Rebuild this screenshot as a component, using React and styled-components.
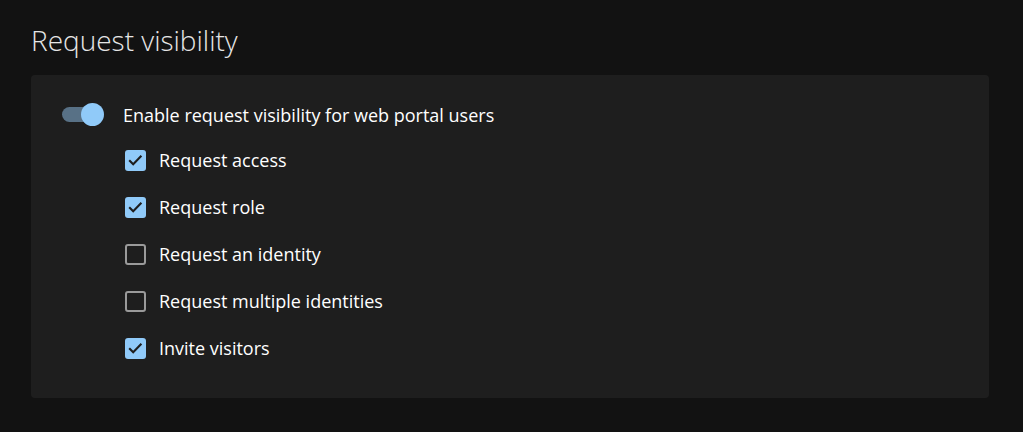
import React from "react";
import styled, { createGlobalStyle } from "styled-components";

const Global = createGlobalStyle`
  html, body { margin: 0; padding: 0; background: #121212; }
  body { font-family: "Open Sans", "Noto Sans", sans-serif; color: #fff; }
`;

const Page = styled.div`
  width: 1023px;
  height: 432px;
  box-sizing: border-box;
  padding: 20px 34px 0 31px;
  background: #121212;
`;

const Title = styled.h1`
  margin: 0 0 15px 0;
  font-size: 28px;
  font-weight: 300;
  line-height: 40px;
  color: #e6e6e6;
  letter-spacing: 0;
`;

const Card = styled.section`
  background: #1e1e1e;
  border-radius: 4px;
  height: 323px;
  box-sizing: border-box;
  padding: 28px 31px 0 31px;
  display: flex;
  flex-direction: column;
`;

const SwitchRow = styled.label`
  display: flex;
  align-items: center;
  gap: 19px;
  height: 24px;
  font-size: 18px;
  color: #fff;
`;

const SwitchBox = styled.span`
  position: relative;
  width: 42px;
  height: 24px;
  flex: none;
`;

const Track = styled.span`
  position: absolute;
  left: 0;
  top: 4px;
  width: 36px;
  height: 15px;
  border-radius: 8px;
  background: #587186;
`;

const Thumb = styled.span`
  position: absolute;
  right: 0;
  top: 0;
  width: 23px;
  height: 23px;
  border-radius: 50%;
  background: #90caf9;
`;

const Options = styled.div`
  display: flex;
  flex-direction: column;
  gap: 27px;
  margin-top: 23px;
  padding-left: 63px;
`;

const OptionRow = styled.label`
  display: flex;
  align-items: center;
  gap: 13px;
  height: 20px;
  font-size: 18px;
  color: #fff;
`;

const Box = styled.span`
  width: 21px;
  height: 21px;
  box-sizing: border-box;
  border-radius: 3px;
  flex: none;
  display: flex;
  align-items: center;
  justify-content: center;
  background: ${(p) => (p.$checked ? "#90caf9" : "transparent")};
  border: ${(p) => (p.$checked ? "none" : "2px solid #9a9a9a")};
`;

const Check = () => (
  <svg width="21" height="21" viewBox="0 0 21 21">
    <path d="M4.2 10.2 L8.2 14.2 L16.4 5.8" fill="none" stroke="#1e1e1e" strokeWidth="2.1" />
  </svg>
);

const options = [
  ["Request access", true],
  ["Request role", true],
  ["Request an identity", false],
  ["Request multiple identities", false],
  ["Invite visitors", true],
];

export default function App() {
  return (
    <Page>
      <Global />
      <Title>Request visibility</Title>
      <Card>
        <SwitchRow>
          <SwitchBox>
            <Track />
            <Thumb />
          </SwitchBox>
          Enable request visibility for web portal users
        </SwitchRow>
        <Options>
          {options.map(([label, checked]) => (
            <OptionRow key={label}>
              <Box $checked={checked}>{checked && <Check />}</Box>
              {label}
            </OptionRow>
          ))}
        </Options>
      </Card>
    </Page>
  );
}
